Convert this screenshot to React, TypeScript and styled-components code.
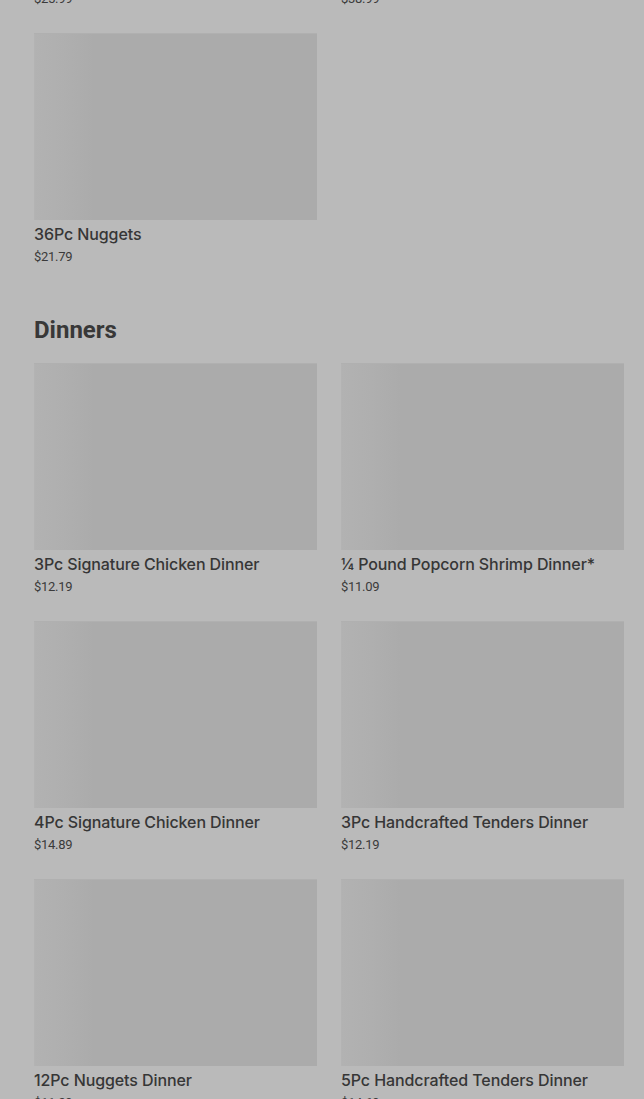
import React from "react";
import styled, { createGlobalStyle } from "styled-components";

const GlobalStyle = createGlobalStyle`
  html, body {
    margin: 0;
    padding: 0;
    background: #bababa;
    font-family: Roboto, "Liberation Sans", sans-serif;
    overflow: hidden;
  }
`;

// page is shown scrolled: the tail of the previous section sits above the fold
const Page = styled.main`
  margin-top: -225px;
  padding: 0 20px 40px 34px;
`;

const Section = styled.section`
  & + & {
    margin-top: 47px;
  }
`;

const Heading = styled.h2`
  margin: 0 0 17px 0;
  padding-top: 1px;
  font-size: 24px;
  line-height: 32px;
  font-weight: 700;
  color: #383838;
`;

const Grid = styled.div`
  display: grid;
  grid-template-columns: repeat(2, 1fr);
  column-gap: 24px;
  row-gap: 25px;
`;

const Card = styled.div`
  display: flex;
  flex-direction: column;
`;

const Thumb = styled.div`
  height: 187px;
  background: linear-gradient(90deg, #b2b2b2 0px, #afafaf 30px, #ababab 60px, #ababab 100%);
  box-shadow: inset 0 1px 0 #b0b0b0, inset 1px 0 0 #b3b3b3;
`;

const Name = styled.div`
  margin-top: 3px;
  font-family: Inter, Roboto, sans-serif;
  font-size: 16px;
  line-height: 22px;
  font-weight: 500;
  color: #363636;
  letter-spacing: -0.1px;
`;

const Price = styled.div`
  margin-top: 3px;
  font-size: 13px;
  line-height: 18px;
  color: #3a3a3a;
  letter-spacing: -0.3px;
`;

type Item = { name: string; price: string };

const sections: { title?: string; items: Item[] }[] = [
  {
    items: [
      { name: "24Pc Nuggets", price: "$25.99" },
      { name: "48Pc Nuggets", price: "$38.99" },
      { name: "36Pc Nuggets", price: "$21.79" },
    ],
  },
  {
    title: "Dinners",
    items: [
      { name: "3Pc Signature Chicken Dinner", price: "$12.19" },
      { name: "¼ Pound Popcorn Shrimp Dinner*", price: "$11.09" },
      { name: "4Pc Signature Chicken Dinner", price: "$14.89" },
      { name: "3Pc Handcrafted Tenders Dinner", price: "$12.19" },
      { name: "12Pc Nuggets Dinner", price: "$11.29" },
      { name: "5Pc Handcrafted Tenders Dinner", price: "$14.69" },
    ],
  },
];

export default function App() {
  return (
    <>
      <GlobalStyle />
      <Page>
        {sections.map((s, i) => (
          <Section key={i}>
            {s.title && <Heading>{s.title}</Heading>}
            <Grid>
              {s.items.map(item => (
                <Card key={item.name}>
                  <Thumb />
                  <Name>{item.name}</Name>
                  <Price>{item.price}</Price>
                </Card>
              ))}
            </Grid>
          </Section>
        ))}
      </Page>
    </>
  );
}
